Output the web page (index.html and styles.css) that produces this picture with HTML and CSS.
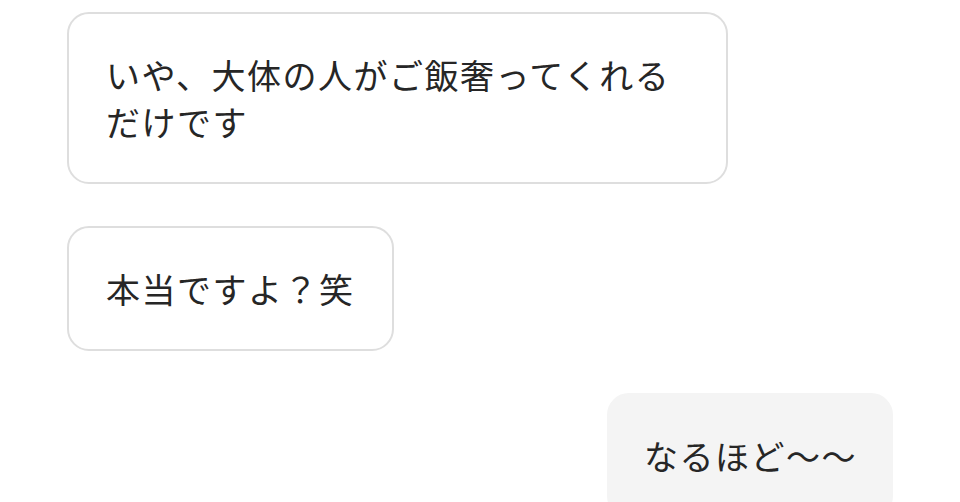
FILE: index.html
```html
<!DOCTYPE html>
<html lang="ja">
<head>
<meta charset="utf-8">
<link rel="stylesheet" href="styles.css">
</head>
<body>
<main class="chat">
  <div class="bubble bubble-in bubble-wide">いや、大体の人がご飯奢ってくれるだけです</div>
  <div class="bubble bubble-in">本当ですよ？笑</div>
  <div class="bubble bubble-out">なるほど〜〜</div>
</main>
</body>
</html>
```

FILE: styles.css
```css
html, body {
  margin: 0;
  padding: 0;
  background: #ffffff;
}

.chat {
  display: flex;
  flex-direction: column;
  gap: 42px;
  padding: 12px 67px 0 67px;
  width: 960px;
  box-sizing: border-box;
  font-family: "Noto Sans CJK JP", "Noto Sans", sans-serif;
  font-size: 34px;
  letter-spacing: 1.5px;
  line-height: 47px;
  color: #262626;
}

.bubble {
  box-sizing: border-box;
  padding: 37px 37px 37px 37px;
  border-radius: 22px;
  border: 2px solid #dedede;
  background: #ffffff;
}

.bubble-in {
  align-self: flex-start;
}

.bubble-wide {
  width: 661px;
}

.bubble-out {
  align-self: flex-end;
  background: #f4f4f4;
  border-color: #f4f4f4;
  padding-left: 35px;
  padding-right: 34px;
}
```
